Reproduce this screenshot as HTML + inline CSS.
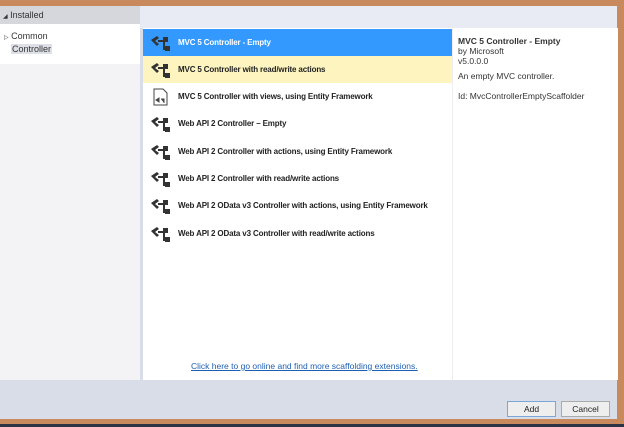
<!DOCTYPE html>
<html><head><style>
body{margin:0;width:624px;height:427px;overflow:hidden;background:#c88a5c;font-family:"Liberation Sans",sans-serif;position:relative}
.win{position:absolute;left:0;top:6px;width:617px;height:413px;background:#d9dde8}
.hdrL{position:absolute;left:0;top:0;width:140px;height:18px;background:#d5d7dc;font-size:9px;color:#333;line-height:18px}
.hdrR{position:absolute;left:140px;top:0;width:477px;height:22px;background:#e8ebf3}
.left{position:absolute;left:0;top:18px;width:140px;height:356px;background:#f3f3f6}
.leftw{position:absolute;left:0;top:18px;width:140px;height:40px;background:#fff;font-size:9px;color:#333}
.mid{position:absolute;left:143px;top:22px;width:309px;height:352px;background:#fff}
.right{position:absolute;left:452px;top:22px;width:165px;height:352px;background:#fff;font-size:8.5px;color:#333;border-left:1px solid #eee}
.row{position:absolute;left:0;width:309px;height:27px;font-size:8px;font-weight:bold;color:#222;line-height:27px;white-space:nowrap;letter-spacing:-0.15px}
.row span{position:absolute;left:35px}
.row svg{position:absolute;left:7px;top:5px}
.btn{position:absolute;top:395px;width:47px;height:14px;border:1px solid #aaa;background:#eee;font-size:8.5px;text-align:center;line-height:14px;color:#222}
</style></head><body>
<div class="win">
<div class="hdrL"><span style="font-size:6px;margin-left:3px">◢</span> Installed</div>
<div class="hdrR"></div>
<div class="left"></div>
<div class="leftw"><div style="position:absolute;left:4px;top:7px"><span style="font-size:6px">▷</span> Common</div><div style="position:absolute;left:11px;top:20px;background:#dde0e6;padding:0 1px">Controller</div></div>
<div class="mid">
<svg width="0" height="0"><defs><g id="ic"><path d="M1 6 L7 2 L9 4 L5 7 L9 10 L7 12 Z" fill="#333"/><path d="M8 7 H14 V15 H18" stroke="#333" stroke-width="2" fill="none"/><rect x="13" y="3" width="5" height="5" fill="#333"/><rect x="15" y="12" width="5" height="5" fill="#333"/></g></defs></svg>
<div class="row" style="top:1px;background:#3399ff;color:#fff"><svg width="22" height="18"><use href="#ic"/></svg><span>MVC 5 Controller - Empty</span></div>
<div class="row" style="top:28px;background:#fdf4c0"><svg width="22" height="18"><use href="#ic"/></svg><span>MVC 5 Controller with read/write actions</span></div>
<div class="row" style="top:55px"><svg width="22" height="18"><path d="M4 1 H13 L17 5 V17 H4 Z" fill="#fff" stroke="#444"/><path d="M6 12 L9 10 L9 14 Z M11 11 H14 V15" fill="#444" stroke="#444"/></svg><span>MVC 5 Controller with views, using Entity Framework</span></div>
<div class="row" style="top:82px"><svg width="22" height="18"><use href="#ic"/></svg><span>Web API 2 Controller – Empty</span></div>
<div class="row" style="top:110px"><svg width="22" height="18"><use href="#ic"/></svg><span>Web API 2 Controller with actions, using Entity Framework</span></div>
<div class="row" style="top:137px"><svg width="22" height="18"><use href="#ic"/></svg><span>Web API 2 Controller with read/write actions</span></div>
<div class="row" style="top:164px"><svg width="22" height="18"><use href="#ic"/></svg><span>Web API 2 OData v3 Controller with actions, using Entity Framework</span></div>
<div class="row" style="top:192px"><svg width="22" height="18"><use href="#ic"/></svg><span>Web API 2 OData v3 Controller with read/write actions</span></div>
<div style="position:absolute;left:48px;top:333px;font-size:8.5px;color:#1e5fb3;text-decoration:underline">Click here to go online and find more scaffolding extensions.</div>
</div>
<div class="right"><div style="position:absolute;left:5px;top:8px;line-height:10px"><b>MVC 5 Controller - Empty</b><br>by Microsoft<br>v5.0.0.0</div><div style="position:absolute;left:5px;top:43px">An empty MVC controller.</div><div style="position:absolute;left:5px;top:63px">Id: MvcControllerEmptyScaffolder</div></div>
<div class="btn" style="left:507px;border-color:#7aa7d8">Add</div>
<div class="btn" style="left:561px">Cancel</div>
</div>
<div style="position:absolute;left:0;top:424px;width:624px;height:3px;background:#2b3345"></div>
</body></html>
